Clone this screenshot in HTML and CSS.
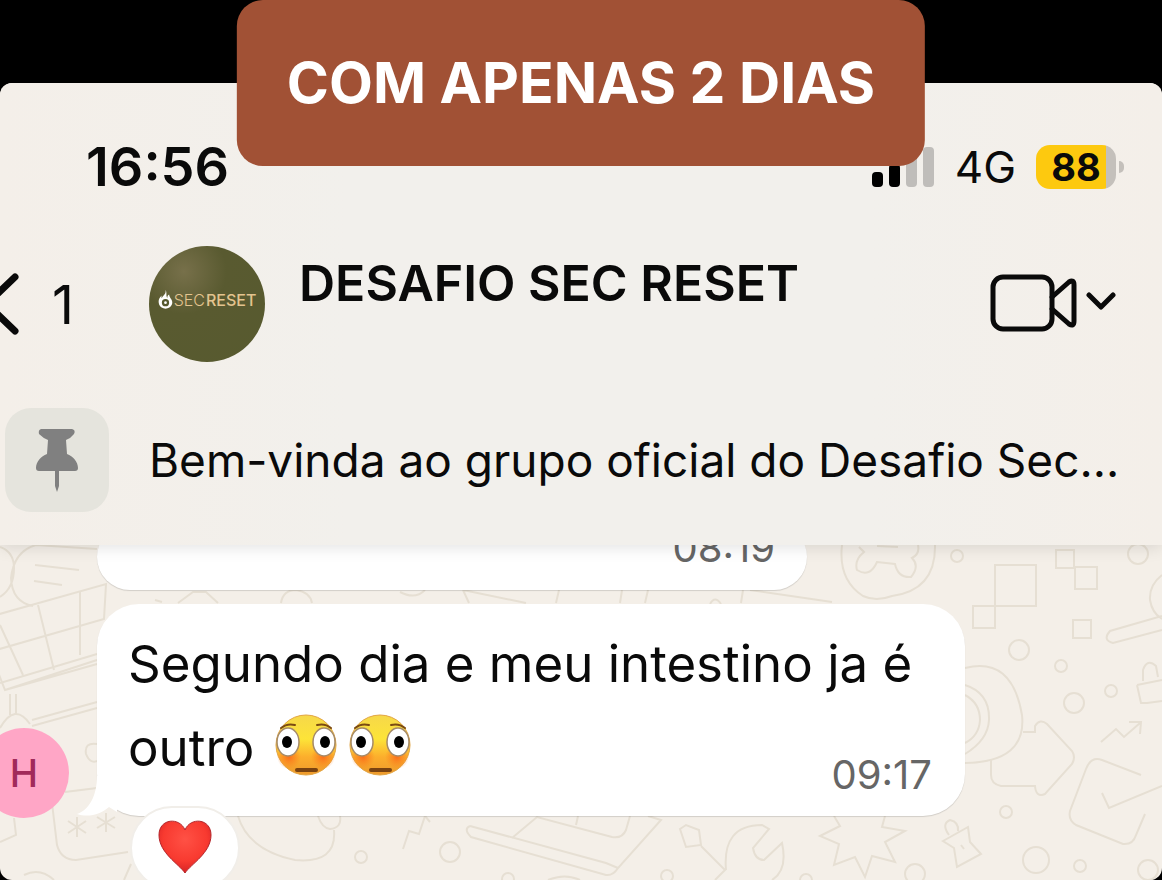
FILE: index.html
```html
<!DOCTYPE html>
<html lang="pt-BR">
  <head>
    <meta charset="UTF-8" />
    <meta name="viewport" content="width=device-width, initial-scale=1.0" />
    <title>Desafio Sec Reset</title>

    <link rel="stylesheet" href="styles.css">
  </head>
  <body>
    <h1 class="banner">COM APENAS 2 DIAS</h1>

    <main class="screen">
      <header class="top">
        <div class="status">
          <span class="clock">16:56</span>
          <svg class="signal" width="64" height="40" viewBox="0 0 64 40">
            <rect x="1" y="25" width="11" height="15" rx="4" />
            <rect x="18" y="17" width="11" height="23" rx="4" />
            <rect class="off" x="35" y="8" width="11" height="32" rx="4" />
            <rect class="off" x="52" y="0" width="11" height="40" rx="4" />
          </svg>
          <span class="network">4G</span>
          <span class="battery">88</span>
          <span class="battery-tip"></span>
        </div>

        <div class="chat-bar">
          <button class="back" type="button" aria-label="Voltar">
            <svg width="20" height="64" viewBox="0 0 20 64">
              <path d="M15 5 L-13 32 L15 59" />
            </svg>
            <span>1</span>
          </button>
          <div class="avatar">
            <svg width="15" height="20" viewBox="0 0 16 22">
              <path d="M8 0 C9 5 5 6 4 9 C3 8 4 6 4 6 C0 9 0 13 1 16 C3 22 13 22 15 16 C17 11 12 9 12 5 C10 6 10 8 10 9 C8 6 10 3 8 0 Z" />
              <circle cx="8" cy="14" r="4" />
              <circle class="dot" cx="8" cy="14" r="1.5" />
            </svg>
            <span>SEC</span><b>RESET</b>
          </div>
          <h2 class="title">DESAFIO SEC RESET</h2>
          <button class="video" type="button" aria-label="Chamada de vídeo">
            <svg width="126" height="60" viewBox="0 0 126 60">
              <rect x="3" y="3" width="59" height="52" rx="10" />
              <path d="M62 23 L79 8 Q84 5 84 11 V47 Q84 53 79 50 L62 35" />
              <path class="arrow" d="M99 21 L111 33 L123 21" />
            </svg>
          </button>
        </div>

        <div class="pinned">
          <div class="pin">
            <svg width="44" height="64" viewBox="0 0 44 64">
              <path d="M6 1 H37 Q41 2 39 6 Q36 10 31 12 L32 26 C38 28 43 34 43 40 Q43 43 40 43 H24 V58 L22 64 L20 58 V43 H4 Q1 43 1 40 C1 34 6 28 12 26 L13 12 Q8 10 4 6 Q3 2 6 1 Z" />
            </svg>
          </div>
          <p>Bem-vinda ao grupo oficial do Desafio Sec...</p>
        </div>
      </header>

      <section class="chat">
        <svg class="wallpaper" viewBox="0 545 1162 335" preserveAspectRatio="xMinYMin slice">
          <!-- cart and bread -->
          <path d="M0 547 Q14 552 14 568 Q14 588 0 597 M97 549 L36 545 Q14 551 11 578 Q12 602 33 606 M35 565 L79 570 M34 581 L62 585" />
          <path d="M-4 615 L106 584 L104 619 L-4 650 M38 605 L54 670 M80 592 V655 M0 625 L23 675 M5 690 L97 660 M-2 672 L5 690 L97 664 M0 683 L97 654 M10 694 V715 M16 694 V714 M32 720 L97 702 M32 726 L97 708 M0 728 Q15 702 30 724" />
          <path d="M97 744 Q84 742 86 754 Q90 764 97 761 M65 792 L97 788 M52 803 L57 845 Q61 860 76 860 L128 852 M14 818 L16 835 L0 842 M24 875 Q40 867 54 880 M124 880 L131 864" />
          <path d="M77 817 V837 M68 821 L86 833 M68 833 L86 821 M106 813 V832 M97 817 L115 828 M97 828 L115 817" />
          <!-- between the bubbles -->
          <path d="M155 600 L162 602 M178 603 L193 592 H206 L218 603 M281 603 Q283 590 296 590 Q310 592 312 603 M400 592 Q415 600 425 590 M463 590 L469 603 M463 590 L526 603 M559 590 L556 603 M622 590 L620 603 M648 590 L645 603 M710 604 Q715 595 721 604 M743 590 L741 603 M750 590 L832 602" />
          <!-- blob, bolt, laptop, wrench -->
          <path d="M238 816 Q248 850 295 860 Q337 864 334 830 M318 816 Q322 828 330 829 Q342 828 340 816 M403 849 L409 831 L419 834 L425 816 L430 822" />
          <path d="M470 826 L606 863 L618 868 M470 826 Q463 829 471 837 L606 875 Q613 876 618 868 L661 820 L648 816 M512 838 L537 817 L612 837 Q622 839 626 830 L630 816 M578 816 L576 825" />
          <path d="M680 829 L686 825 L699 830 L701 845 L686 847 Z M701 846 L725 870 L715 880 M726 870 Q722 825 762 825 L769 829 L753 848 Q755 860 764 860 L782 843 Q788 870 772 880 M548 880 Q565 873 580 880" />
          <!-- bone -->
          <path d="M842 545 Q838 580 863 596 Q876 602 892 596 Q936 590 935 545 M859 547 L864 552 Q854 560 857 570 Q870 578 877 562 L895 564 Q898 578 911 577 Q920 566 912 558 Q920 554 918 545 M877 546 L898 547" />
          <!-- squares and dots -->
          <path d="M995 565 H1036 V606 H995 Z M973 606 H995 V628 H973 Z M1056 550 H1074 V568 H1056 Z M1075 567 H1097 V589 H1075 Z M1073 620 H1091 V638 H1073 Z" />
          <g>
            <circle cx="957" cy="556" r="6" />
            <circle cx="1138" cy="554" r="10" />
            <circle cx="1019" cy="650" r="10" />
            <circle cx="1061" cy="666" r="6" />
            <circle cx="1074" cy="703" r="10" />
            <circle cx="1111" cy="691" r="6" />
            <circle cx="1006" cy="812" r="6" />
            <circle cx="1036" cy="860" r="13" />
            <circle cx="1080" cy="866" r="6" />
            <circle cx="1148" cy="870" r="10" />
            <circle cx="915" cy="874" r="10" />
            <circle cx="806" cy="880" r="6" />
            <circle cx="450" cy="852" r="10" />
            <circle cx="361" cy="857" r="6" />
            <circle cx="508" cy="879" r="6" />
            <circle cx="667" cy="876" r="6" />
          </g>
          <path d="M1162 575 Q1149 585 1150 600 Q1152 613 1162 619 M1162 616 L1110 631 Q1102 640 1113 643 L1162 630" />
          <path d="M1137 685 L1162 680 M1137 685 L1141 703 H1147 L1162 701 M1143 681 V670 Q1147 658 1156 666 L1158 677" />
          <!-- camera, arrow, trend line, check box -->
          <path d="M965 668 Q1012 656 1022 715 Q1027 762 965 763 M965 685 Q990 693 989 720 Q988 740 965 754 M965 695 Q980 703 980 720 Q979 736 965 743" />
          <path d="M1023 732 H1035 V726 Q1040 718 1047 724 L1072 751 Q1076 757 1072 764 L1045 794 Q1036 798 1035 786 H1001 Q991 784 991 775 V760" />
          <path d="M1101 742 L1116 729 L1124 737 L1140 723 M1129 722 L1141 722 L1140 734 M1141 775 L1102 760 Q1091 756 1086 769 L1070 811 Q1068 820 1076 825 L1123 844 Q1133 845 1136 835 L1145 814 M1102 793 L1109 808 L1162 786" />
          <!-- star and bauble -->
          <path d="M834 816 L840 826 L820 836 L839 844 L834 865 L855 857 L865 877 L872 856 L895 862 L885 842 L905 831 L882 827 L885 816" />
          <path d="M943 841 L968 827 L970 842 L981 854 L957 867 L954 848 Z M949 835 Q941 824 950 820 Q959 822 958 831 M961 845 L964 849" />
        </svg>

        <article class="bubble earlier">
          <time>08:19</time>
        </article>

        <article class="bubble message">
          <svg class="tail" width="42" height="40" viewBox="0 0 42 40">
            <path d="M22 0 C22 20 14 34 2 38 C14 42 26 38 34 31 L42 36 V0 Z" />
          </svg>
          <p>
            Segundo dia e meu intestino ja é outro
            <svg class="emoji" role="img" aria-label="😳" width="62" height="62" viewBox="0 0 62 62">
              <defs>
                <linearGradient id="face" x1="0" y1="0" x2="0" y2="1">
                  <stop offset="0" stop-color="#f6d84a" />
                  <stop offset="0.400" stop-color="#fde438" />
                  <stop offset="0.700" stop-color="#fcae2c" />
                  <stop offset="1" stop-color="#ee9a2c" />
                </linearGradient>
                <radialGradient id="blush">
                  <stop offset="0" stop-color="#fa6f1c" />
                  <stop offset="1" stop-color="#fa7f1c" stop-opacity="0" />
                </radialGradient>
                <g id="flushed">
                  <circle cx="31" cy="31" r="30" fill="url(#face)" stroke="#e2a545" />
                  <ellipse cx="14" cy="43" rx="12" ry="12" fill="url(#blush)" />
                  <ellipse cx="48" cy="43" rx="12" ry="12" fill="url(#blush)" />
                  <ellipse cx="13" cy="28" rx="11" ry="14" fill="#fff" stroke="#a58a68" stroke-width="1.500" />
                  <ellipse cx="49" cy="28" rx="11" ry="14" fill="#fff" stroke="#a58a68" stroke-width="1.500" />
                  <ellipse cx="12" cy="28" rx="5" ry="6" />
                  <ellipse cx="50" cy="28" rx="5" ry="6" />
                  <path d="M6 14 Q12 9 20 11 M42 11 Q50 9 56 14" fill="none" stroke="#7b4a12" stroke-width="2" stroke-linecap="round" />
                  <path d="M22 56 H41" stroke="#7a4310" stroke-width="4" stroke-linecap="round" />
                </g>
              </defs>
              <use href="#flushed" />
            </svg>
            <svg class="emoji" role="img" aria-label="😳" width="62" height="62" viewBox="0 0 62 62">
              <use href="#flushed" />
            </svg>
          </p>
          <time>09:17</time>
          <span class="sender">H</span>
          <button class="reaction" type="button" aria-label="❤️">
            <svg width="54" height="54" viewBox="0 0 54 54">
              <defs>
                <radialGradient id="heart" cx="0.500" cy="0.350" r="0.700">
                  <stop offset="0" stop-color="#ff5145" />
                  <stop offset="0.600" stop-color="#f83a30" />
                  <stop offset="1" stop-color="#cf1d22" />
                </radialGradient>
              </defs>
              <path d="M27 53 C21 44 1 33 1 15 C1 -2 22 -3 27 10 C32 -3 53 -2 53 15 C53 33 33 44 27 53 Z" fill="url(#heart)" stroke="#b3252a" />
            </svg>
          </button>
        </article>
      </section>
    </main>
  </body>
</html>
```

FILE: styles.css
```css
* {
  box-sizing: border-box;
}

body {
  margin: 0;
  min-height: 100vh;
  padding-top: 83px;
  display: flex;
  flex-direction: column;
  position: relative;
  background-color: #000;
  color: #0a0a0a;
  font-family: Inter, "Liberation Sans", sans-serif;
}

h1,
h2,
p {
  margin: 0;
}

button {
  border: none;
  padding: 0;
  background: none;
  color: inherit;
  font: inherit;
  cursor: pointer;
}

svg {
  display: block;
}

.banner {
  position: absolute;
  top: 0;
  left: 50%;
  transform: translateX(-50%);
  z-index: 3;
  padding: 43px 50px;
  border-radius: 26px;
  background-color: #a15135;
  color: #fff;
  font-size: 57px;
  font-weight: 700;
  line-height: 80px;
  white-space: nowrap;
}

.screen {
  flex: 1;
  display: flex;
  flex-direction: column;
  overflow: hidden;
  border-radius: 12px;
  background-color: #f4efe8;
}

/* Header */
.top {
  position: relative;
  z-index: 2;
  padding: 57px 0 33px;
  background: linear-gradient(90deg, #f4efe9 0%, #f2f0ec 30%, #f2f0ec 75%, #f4efe9 100%);
  box-shadow: 0 2px 16px rgba(0, 0, 0, 0.12);
}

.status {
  display: flex;
  align-items: center;
  height: 54px;
  padding: 0 38px 0 86px;
  line-height: 54px;
}

.clock {
  margin-right: auto;
  font-size: 54px;
  font-weight: 600;
}

.signal {
  margin-right: 20px;
}

.signal .off {
  fill: #bfbdba;
}

.network {
  margin-right: 20px;
  font-size: 44px;
}

.battery {
  width: 80px;
  height: 44px;
  border-radius: 14px;
  background: linear-gradient(90deg, #fdc90f 70px, #c4c0bb 70px);
  font-size: 38px;
  font-weight: 700;
  line-height: 44px;
  text-align: center;
}

.battery-tip {
  width: 5px;
  height: 12px;
  margin-left: 3px;
  border-radius: 0 6px 6px 0;
  background-color: #c4c0bb;
}

.chat-bar {
  display: flex;
  align-items: center;
  margin-top: 52px;
  padding-right: 46px;
}

.back {
  display: flex;
  align-items: center;
  width: 149px;
  font-size: 54px;
}

.back svg {
  margin-right: 32px;
}

.back path,
.video svg {
  fill: none;
  stroke: #0a0a0a;
  stroke-width: 7;
  stroke-linecap: round;
  stroke-linejoin: round;
}

.video svg {
  stroke-width: 5;
}

.avatar {
  display: flex;
  align-items: center;
  justify-content: center;
  width: 116px;
  height: 116px;
  padding-bottom: 8px;
  border-radius: 50%;
  background: radial-gradient(circle at 30% 22%, #77704a 0%, #595a30 35%, #575a2f 100%);
  color: #e3c48f;
  font-size: 16px;
  font-weight: 300;
}

.avatar svg {
  margin-right: 1px;
  fill: #fff;
}

.avatar circle {
  fill: #575a2f;
}

.avatar .dot {
  fill: #fff;
}

.avatar b {
  margin-left: 1px;
  font-weight: 500;
}

.title {
  flex: 1;
  align-self: flex-start;
  padding-left: 34px;
  font-size: 50px;
  font-weight: 600;
  line-height: 74px;
  white-space: nowrap;
}

.pinned {
  display: flex;
  align-items: center;
  gap: 40px;
  margin-top: 46px;
  padding-left: 5px;
  font-size: 46px;
  white-space: nowrap;
}

.pin {
  display: flex;
  align-items: center;
  justify-content: center;
  width: 104px;
  height: 104px;
  border-radius: 26px;
  background-color: #e5e4dd;
}

.pin path {
  fill: #808080;
}

/* Chat */
.chat {
  flex: 1;
  position: relative;
  overflow: hidden;
  padding-left: 97px;
}

.wallpaper {
  position: absolute;
  top: 0;
  left: 0;
  width: 100%;
  height: 100%;
  fill: none;
  stroke: #e6dfd3;
  stroke-width: 2;
}

.bubble {
  position: relative;
  display: flow-root;
  border-radius: 42px;
  background-color: #fff;
  box-shadow: 0 1px 1px rgba(0, 0, 0, 0.14);
}

.bubble time {
  float: right;
  color: #666;
  font-size: 40px;
  line-height: 48px;
}

.earlier {
  width: 710px;
  margin-top: -21px;
  padding: 0 32px 18px;
}

.message {
  width: 868px;
  margin-top: 14px;
  padding: 18px 33px 17px 31px;
  font-size: 51px;
  line-height: 84px;
}

/* the time sits on the last line of the text */
.message p {
  display: inline;
}

.message time {
  margin-top: 45px;
}

.emoji {
  display: inline-block;
  margin-left: 6px;
  vertical-align: -10px;
}

.emoji + .emoji {
  margin-left: -2px;
}

.tail {
  position: absolute;
  left: -22px;
  bottom: 0;
  fill: #fff;
}

.sender {
  position: absolute;
  left: -118px;
  bottom: -2px;
  width: 90px;
  height: 90px;
  border-radius: 50%;
  background-color: #ffa6c6;
  color: #a12a5a;
  font-size: 38px;
  font-weight: 500;
  line-height: 90px;
  text-align: center;
}

.reaction {
  position: absolute;
  top: 202px;
  left: 33px;
  display: flex;
  justify-content: center;
  width: 110px;
  height: 84px;
  padding-top: 12px;
  border: 2px solid #f1eee9;
  border-radius: 42px;
  background-color: #fff;
}
```
